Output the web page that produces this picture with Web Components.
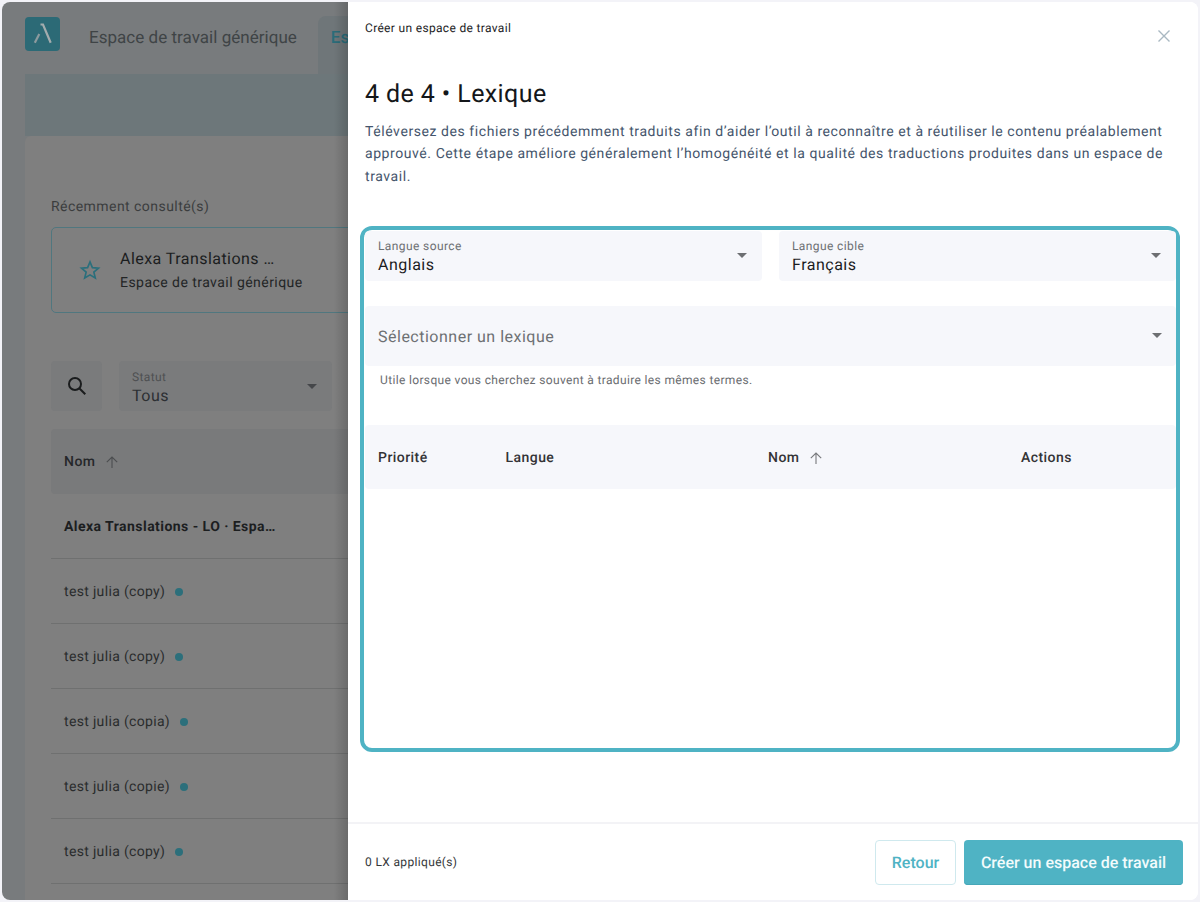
<!DOCTYPE html>
<html lang="fr"><head><meta charset="utf-8"><title>Créer un espace de travail</title>
<style>
html,body{margin:0;height:902px;overflow:hidden;background:#f3f3f8;font-family:Roboto,"Liberation Sans",sans-serif;text-rendering:geometricPrecision}
</style></head><body>
<app-frame>
  <back-page slot="back"></back-page>
  <create-panel slot="panel"></create-panel>
</app-frame>
<template id="t-select">
<style>
:host{display:flex;align-items:center;box-sizing:border-box;background:var(--bg,#f6f7fb);border-radius:4px;padding:0 13px;position:relative;height:var(--h,50px);color:var(--fg,#1c1c1e)}
.t{flex:1;min-width:0;display:flex;flex-direction:column}
.l{font-size:12px;line-height:14px;color:var(--lab,#6d7073);letter-spacing:.4px;padding-top:3px}
.v{font-size:16px;line-height:21px;letter-spacing:.5px;margin-top:1px}
.p{font-size:16px;color:#6d7073;letter-spacing:.5px;padding-top:1px}
svg{display:block;flex:none;margin-right:var(--am,2px)}
</style>
<div class="t" part="t"></div>
<svg width="10" height="5" viewBox="0 0 10 5"><path d="M0 0h10L5 5z" fill="var(--arrow,#6d6f72)"/></svg>
</template>
<script>
class BaseEl extends HTMLElement{
  render(css,html){const r=this.shadowRoot||this.attachShadow({mode:'open'});r.innerHTML=`<style>${css}</style>${html}`;return r}
}
const arrowUp=(c)=>`<svg width="14" height="14" viewBox="0 0 14 14" fill="none" stroke="${c}" stroke-width="1.100"><path d="M7 13V2M1.800 7.200 7 2l5.200 5.200"/></svg>`;

class AppFrame extends BaseEl{connectedCallback(){this.render(`
:host{display:flex;box-sizing:border-box;height:902px;padding:2px}
.w{flex:1;display:flex;border-radius:8px;overflow:hidden;background:#fff;min-width:0}
::slotted([slot=back]){flex:0 0 346px;min-width:0}
::slotted([slot=panel]){flex:1;min-width:0}
`,`<div class="w"><slot name="back"></slot><slot name="panel"></slot></div>`)}}

class SelectBox extends BaseEl{connectedCallback(){
  const r=this.shadowRoot||this.attachShadow({mode:'open'});
  r.appendChild(document.getElementById('t-select').content.cloneNode(true));
  const t=r.querySelector('.t');const l=this.getAttribute('label'),v=this.getAttribute('value'),p=this.getAttribute('placeholder');
  t.innerHTML=p?`<span class="p">${p}</span>`:`<span class="l">${l}</span><span class="v">${v}</span>`;
}}

class BackPage extends BaseEl{connectedCallback(){
  const rows=['test julia (copy)','test julia (copy)','test julia (copia)','test julia (copie)','test julia (copy)'];
  this.render(`
:host{display:block;position:relative;overflow:hidden;background:#787b7d;color:#1e2122;height:100%}
.top{display:flex;height:72px;padding-left:23px;align-items:flex-start;box-sizing:border-box;overflow:hidden}
.logo{flex:none;width:35px;height:34px;margin-top:15px;background:#2c6a76;border-radius:4px}
.logo svg{display:block}
.tab1{flex:none;margin:25px 0 0 29px;font-size:17px;line-height:22px;letter-spacing:.03px;color:#3f4446;white-space:nowrap}
.tab2{flex:1;margin:14px 0 0 21px;height:58px;background:#6f7679;border-radius:8px 0 0 0;padding:11px 0 0 13px;box-sizing:border-box;font-size:17px;line-height:22px;color:#2a6c79;font-weight:500}
.band{margin-left:23px;height:62px;background:#6d777a}
.main{margin-left:23px;background:#7f7f7f;border-radius:6px 0 0 0;padding:61px 0 0 26px;height:900px;box-sizing:border-box;overflow:hidden}
.rec{font-size:14px;line-height:20px;letter-spacing:.45px;color:#3b3d3e}
.card{margin:10px -10px 0 0;height:86px;box-sizing:border-box;border:1px solid #50777f;border-radius:5px;display:flex;align-items:center;padding:2px 0 0 27px;gap:19px}
.card svg{flex:none;margin-top:-2px}
.ct{font-size:16px;line-height:24px;letter-spacing:.45px;color:#1b1d1e}
.cs{font-size:14px;line-height:24px;letter-spacing:.45px;color:#232526}
.filters{display:flex;gap:17px;margin-top:48px}
.search{flex:none;width:51px;height:50px;background:#7a7b7c;border-radius:4px;display:flex;align-items:center;justify-content:center}
select-box{flex:none;width:213px;--bg:#7a7b7c;--fg:#2c2f33;--lab:#4e5052;--arrow:#45474a}
.thead{margin-top:18px;height:65px;background:#797a7b;border-radius:4px 0 0 4px;display:flex;align-items:center;padding-left:13px;gap:10px;font-size:14px;letter-spacing:.45px;font-weight:500;color:#25272a}
.row{height:65px;box-sizing:border-box;border-bottom:1px solid #6f7070;display:flex;align-items:center;padding:1px 0 0 13px;gap:10px;font-size:14px;letter-spacing:.33px;color:#2a2c2d}
.row.b{font-weight:700;color:#1c1e1f;letter-spacing:.45px}
.dot{width:8px;height:8px;border-radius:50%;background:#2c6f7b;flex:none}
.shade{position:absolute;top:0;right:0;bottom:0;width:14px;background:linear-gradient(90deg,rgba(0,0,0,0),rgba(0,0,0,.16))}
`,`
<div class="top">
  <div class="logo"><svg width="35" height="34" viewBox="0 0 35 34" fill="none" stroke-width="2.200"><path d="M15.500 7.500H18L25.700 25.800" stroke="#a3acae"/><path d="M9.800 25.800 14.300 17" stroke="#8b9a9e"/></svg></div>
  <div class="tab1">Espace de travail générique</div>
  <div class="tab2">Es</div>
</div>
<div class="band"></div>
<div class="main">
  <div class="rec">Récemment consulté(s)</div>
  <div class="card">
    <svg width="22" height="22" viewBox="0 0 24 24" fill="none" stroke="#2a6f7c" stroke-width="1.800" stroke-linejoin="miter"><path d="M12 3.200l2.600 6.200 6.700.5-5.100 4.400 1.600 6.500L12 17.300l-5.800 3.500 1.600-6.500-5.100-4.400 6.700-.5z"/></svg>
    <div><div class="ct">Alexa Translations …</div><div class="cs">Espace de travail générique</div></div>
  </div>
  <div class="filters">
    <div class="search"><svg width="24" height="24" viewBox="0 0 24 24" fill="none" stroke="#1a1c1d" stroke-width="2"><circle cx="10" cy="10" r="6"/><path d="M14.500 14.500 20.300 20.300"/></svg></div>
    <select-box label="Statut" value="Tous"></select-box>
  </div>
  <div class="thead"><span>Nom</span>${arrowUp('#4c4e50')}</div>
  <div class="row b"><span>Alexa Translations - LO · Espa…</span></div>
  ${rows.map(r=>`<div class="row"><span>${r}</span><i class="dot"></i></div>`).join('')}
</div>
<div class="shade"></div>`)}}

class CreatePanel extends BaseEl{connectedCallback(){this.render(`
:host{display:flex;flex-direction:column;background:#fff;height:100%;color:#111;position:relative}
.body{flex:1;min-height:0;padding:0 17px}
.crumb{display:flex;justify-content:space-between;align-items:flex-start;padding-top:18px;height:16px;font-size:12px;line-height:16px;letter-spacing:.33px;color:#1c1c1e}
.x{display:block;margin:9px 10px 0 0;flex:none}
h1{margin:42px 0 0;font-size:25px;line-height:34px;font-weight:400;letter-spacing:.4px;color:#14171a}
p{margin:8.600px 0 0;font-size:14px;line-height:22.800px;letter-spacing:.57px;color:#45556c}
.box{margin:37px 1px 0 -5px;height:526px;box-sizing:border-box;border:4px solid #4fb3c4;border-radius:12px;padding:1px 0 0 1px;}
.langs{display:grid;grid-template-columns:397px 397px;column-gap:17px}
.lex{margin-top:25px;--h:60px;--am:1px}
.help{margin:7px 0 0 15px;font-size:12px;line-height:14px;letter-spacing:.35px;color:#6a6c70}
.th{margin-top:38px;height:64px;background:#f6f7fb;border-radius:4px;display:grid;grid-template-columns:127.500px 262.500px 253px 1fr;padding:2px 0 0 13px;box-sizing:border-box;align-items:center;font-size:14px;font-weight:500;letter-spacing:.45px;color:#333336}
.th span{display:flex;align-items:center;gap:10px}
.foot{flex:none;height:76px;border-top:2px solid #f3f3f6;box-sizing:content-box;display:flex;align-items:center;padding:0 15px 0 17px;}
.count{flex:1;font-size:12px;letter-spacing:.35px;color:#35373a}
button{font:500 16px Roboto,"Liberation Sans",sans-serif;letter-spacing:0;height:45px;border-radius:4px;box-sizing:border-box;cursor:pointer;text-rendering:geometricPrecision}
.back{width:81px;background:#fff;color:#4fb3c4;border:1px solid #cfe9ee}
.go{margin-left:8px;width:219px;background:#4fb3c4;color:#f2fbfc;border:0;box-shadow:inset 0 -1px 0 #46a7b8}
`,`
<div class="body">
  <div class="crumb"><span>Créer un espace de travail</span>
  <svg class="x" width="14" height="14" viewBox="0 0 14 14" fill="none" stroke="#a9b8c2" stroke-width="1.400"><path d="M1.500 1.500l11 11M12.500 1.500l-11 11"/></svg></div>
  <h1>4 de 4 • Lexique</h1>
  <p>Téléversez des fichiers précédemment traduits afin d’aider l’outil à reconnaître et à réutiliser le contenu préalablement approuvé. Cette étape améliore généralement l’homogénéité et la qualité des traductions produites dans un espace de travail.</p>
  <div class="box">
    <div class="langs"><select-box label="Langue source" value="Anglais"></select-box><select-box label="Langue cible" value="Français"></select-box></div>
    <select-box class="lex" placeholder="Sélectionner un lexique"></select-box>
    <div class="help">Utile lorsque vous cherchez souvent à traduire les mêmes termes.</div>
    <div class="th"><span>Priorité</span><span>Langue</span><span>Nom ${arrowUp('#77797c')}</span><span>Actions</span></div>
  </div>
</div>
<div class="foot"><span class="count">0 LX appliqué(s)</span><button class="back">Retour</button><button class="go">Créer un espace de travail</button></div>
`)}}
customElements.define('select-box',SelectBox);
customElements.define('back-page',BackPage);
customElements.define('create-panel',CreatePanel);
customElements.define('app-frame',AppFrame);
</script>
</body></html>
